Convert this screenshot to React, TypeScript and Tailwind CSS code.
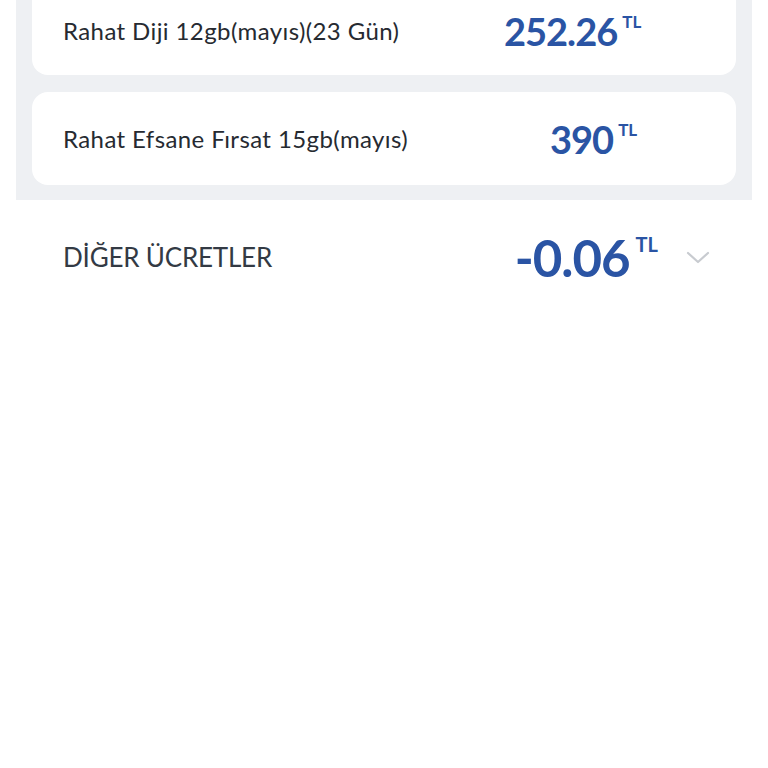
import React from "react";

function Price({ value, big }: { value: string; big?: boolean }) {
  return (
    <div className="flex items-start">
      <span
        className={
          big
            ? "text-[51px] leading-none font-bold text-[#2a54a4] tracking-[-1px]"
            : "text-[38px] leading-none font-bold text-[#2a54a4] tracking-[-1px]"
        }
      >
        {value}
      </span>
      <span
        className={
          big
            ? "ml-[6px] mt-[2px] text-[20px] font-bold leading-none text-[#2a54a4]"
            : "ml-[5px] mt-[1px] text-[17px] font-bold leading-none text-[#2a54a4]"
        }
      >
        TL
      </span>
    </div>
  );
}

export default function App() {
  return (
    <div className="w-[768px] h-[768px] bg-white overflow-hidden" style={{ fontFamily: "Lato, 'Noto Sans', sans-serif" }}>
      <div className="mx-[16px] bg-[#eef0f3] px-[16px] pb-[15px] flex flex-col gap-[17px]">
        <div className="-mt-[16px] h-[91px] bg-white rounded-[16px] flex items-center pl-[31px] pt-[3px]">
          <div className="w-[441px] text-[24px] tracking-[0.4px] text-[#262a31]">Rahat Diji 12gb(mayıs)(23 Gün)</div>
          <Price value="252.26" />
        </div>
        <div className="h-[93px] bg-white rounded-[16px] flex items-center pl-[31px]">
          <div className="w-[487px] text-[24px] tracking-[0.4px] text-[#262a31]">Rahat Efsane Fırsat 15gb(mayıs)</div>
          <Price value="390" />
        </div>
      </div>
      <div className="flex items-center h-[114px] pl-[63px] pr-[58px]">
        <div className="flex-1 text-[26px] text-[#333a44] tracking-[-0.2px]">DİĞER ÜCRETLER</div>
        <Price value="-0.06" big />
        <svg className="ml-[28px]" width="24" height="16" viewBox="0 0 24 16" fill="none">
          <path d="M2 4 L12 13 L22 4" stroke="#c8cbd0" strokeWidth="2.2" strokeLinecap="round" strokeLinejoin="round" />
        </svg>
      </div>
    </div>
  );
}
